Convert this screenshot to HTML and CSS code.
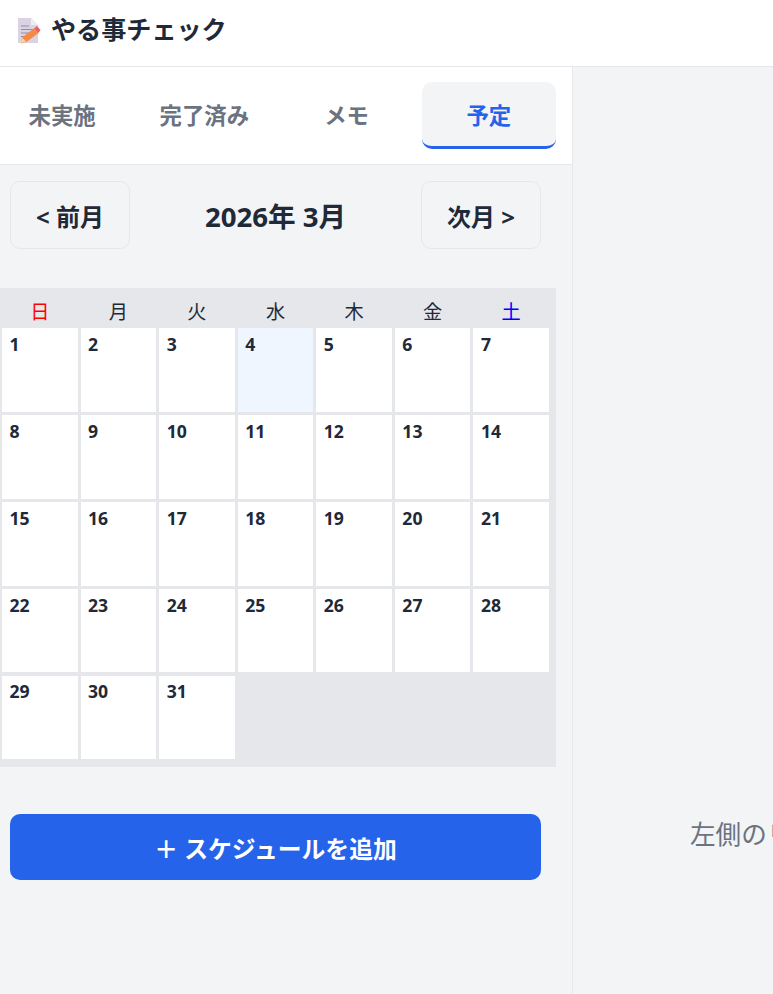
FILE: index.html
```html
<!DOCTYPE html>
<html lang="ja">
<head>
<meta charset="utf-8">
<title>やる事チェック</title>
<link rel="stylesheet" href="styles.css">
</head>
<body>
<header class="topbar">
  <svg class="logo" viewBox="0 0 24 27" width="24" height="27" aria-hidden="true">
    <path d="M1 1h13l7 7v18H1z" fill="#d9d3e4"/>
    <path d="M14 1l7 7h-7z" fill="#efecf3"/>
    <path d="M4 9h8M4 12.500h13M4 16h9M4 19.500h5" stroke="#928da0" stroke-width="1.200"/>
    <path d="M5 20.500l12-9 4.500 4.500-12 9-5.500 1.500z" fill="#f58a45"/>
    <path d="M17 11.500l3-2.500 3.500 4-2 3z" fill="#ee5f5f"/>
    <path d="M3.500 26l1.500-5.500 4.500 4.500z" fill="#f8d3a2"/>
  </svg>
  <h1 class="title">やる事チェック</h1>
</header>
<div class="layout">
  <aside class="sidebar">
    <nav class="tabs">
      <button class="tab">未実施</button>
      <button class="tab">完了済み</button>
      <button class="tab">メモ</button>
      <button class="tab tab-active">予定</button>
    </nav>
    <div class="month-nav">
      <button class="month-btn">&lt; 前月</button>
      <div class="month-label">2026年 3月</div>
      <button class="month-btn">次月 &gt;</button>
    </div>
    <div class="calendar">
      <div class="weekdays">
        <div class="sun">日</div><div>月</div><div>火</div><div>水</div><div>木</div><div>金</div><div class="sat">土</div>
      </div>
      <div class="days">
        <div class="day">1</div><div class="day">2</div><div class="day">3</div><div class="day today">4</div><div class="day">5</div><div class="day">6</div><div class="day">7</div>
        <div class="day">8</div><div class="day">9</div><div class="day">10</div><div class="day">11</div><div class="day">12</div><div class="day">13</div><div class="day">14</div>
        <div class="day">15</div><div class="day">16</div><div class="day">17</div><div class="day">18</div><div class="day">19</div><div class="day">20</div><div class="day">21</div>
        <div class="day">22</div><div class="day">23</div><div class="day">24</div><div class="day">25</div><div class="day">26</div><div class="day">27</div><div class="day">28</div>
        <div class="day">29</div><div class="day">30</div><div class="day">31</div>
      </div>
    </div>
    <button class="add-btn">＋ スケジュールを追加</button>
  </aside>
  <main class="detail">
    <p class="placeholder">左側のリストから項目を選択してください</p>
  </main>
</div>
</body>
</html>
```
FILE: styles.css
```css
* { box-sizing: border-box; }
html, body { margin: 0; height: 100%; overflow: hidden; }
body {
  font-family: "Open Sans", "Noto Sans CJK JP", sans-serif;
  background: #f3f4f6;
  color: #1f2937;
  width: 773px;
  height: 994px;
}
button { font-family: inherit; }
.topbar {
  height: 67px;
  background: #fff;
  border-bottom: 1px solid #e5e7eb;
  display: flex;
  align-items: center;
  padding: 0 0 6px 17px;
  gap: 10px;
}
.logo { display: block; margin-top: 1px; }
.title { margin: 0; font-size: 25.100px; font-weight: 700; line-height: 1; color: #1f2937; }
.layout { display: flex; height: 927px; }
.sidebar { width: 573px; flex: none; border-right: 1px solid #e5e7eb; background: #f3f4f6; }
.tabs {
  display: grid;
  grid-template-columns: repeat(4, 1fr);
  gap: 8px;
  background: #fff;
  border-bottom: 1px solid #e5e7eb;
  height: 98px;
  margin-left: -5px;
  padding: 15px 16px 15px 0;
  width: 577px;
}
.tab {
  border: 0;
  background: transparent;
  font-size: 22.400px;
  font-weight: 700;
  color: #6b7280;
  border-radius: 10px;
  padding: 0;
  border-bottom: 3px solid transparent;
}
.tab-active { background: #f3f4f6; color: #2563eb; border-bottom-color: #2563eb; }
.month-nav {
  display: flex;
  align-items: center;
  justify-content: space-between;
  padding: 16px 31px 0 10px;
}
.month-btn {
  width: 120px;
  height: 68px;
  background: #f3f4f6;
  border: 1px solid #e5e7eb;
  border-radius: 10px;
  font-size: 24px;
  font-weight: 700;
  color: #1f2937;
  padding: 0;
}
.month-label { font-size: 27.600px; font-weight: 700; color: #1f2937; }
.calendar {
  margin: 39.400px 0 0 -5px;
  width: 561px;
  background: #e5e7eb;
  padding: 7px 7px 7.600px;
}
.weekdays {
  display: grid;
  grid-template-columns: repeat(7, 1fr);
  gap: 3px;
  height: 33px;
  text-align: center;
  font-size: 19.200px;
  line-height: 33px;
  color: #1f2937;
}
.sun { color: #ff0000; }
.sat { color: #0000ff; }
.days {
  display: grid;
  grid-template-columns: repeat(7, 1fr);
  grid-auto-rows: 83.600px;
  gap: 3.200px 3px;
}
.day {
  background: #fff;
  font-size: 17.600px;
  font-weight: 700;
  padding: 3.900px 7.500px;
  line-height: 24px;
  color: #1f2937;
}
.today { background: #eff6ff; }
.add-btn {
  display: block;
  margin: 47px 0 0 10px;
  width: 531px;
  height: 66px;
  background: #2563eb;
  color: #fff;
  border: 0;
  border-radius: 10px;
  font-size: 23.800px;
  font-weight: 700;
  padding: 2px 0 0;
}
.detail { flex: none; width: 800px; padding: 751px 0 0 117px; }
.placeholder { margin: 0; font-size: 25.600px; line-height: 34px; color: #6b7280; white-space: nowrap; }
```
